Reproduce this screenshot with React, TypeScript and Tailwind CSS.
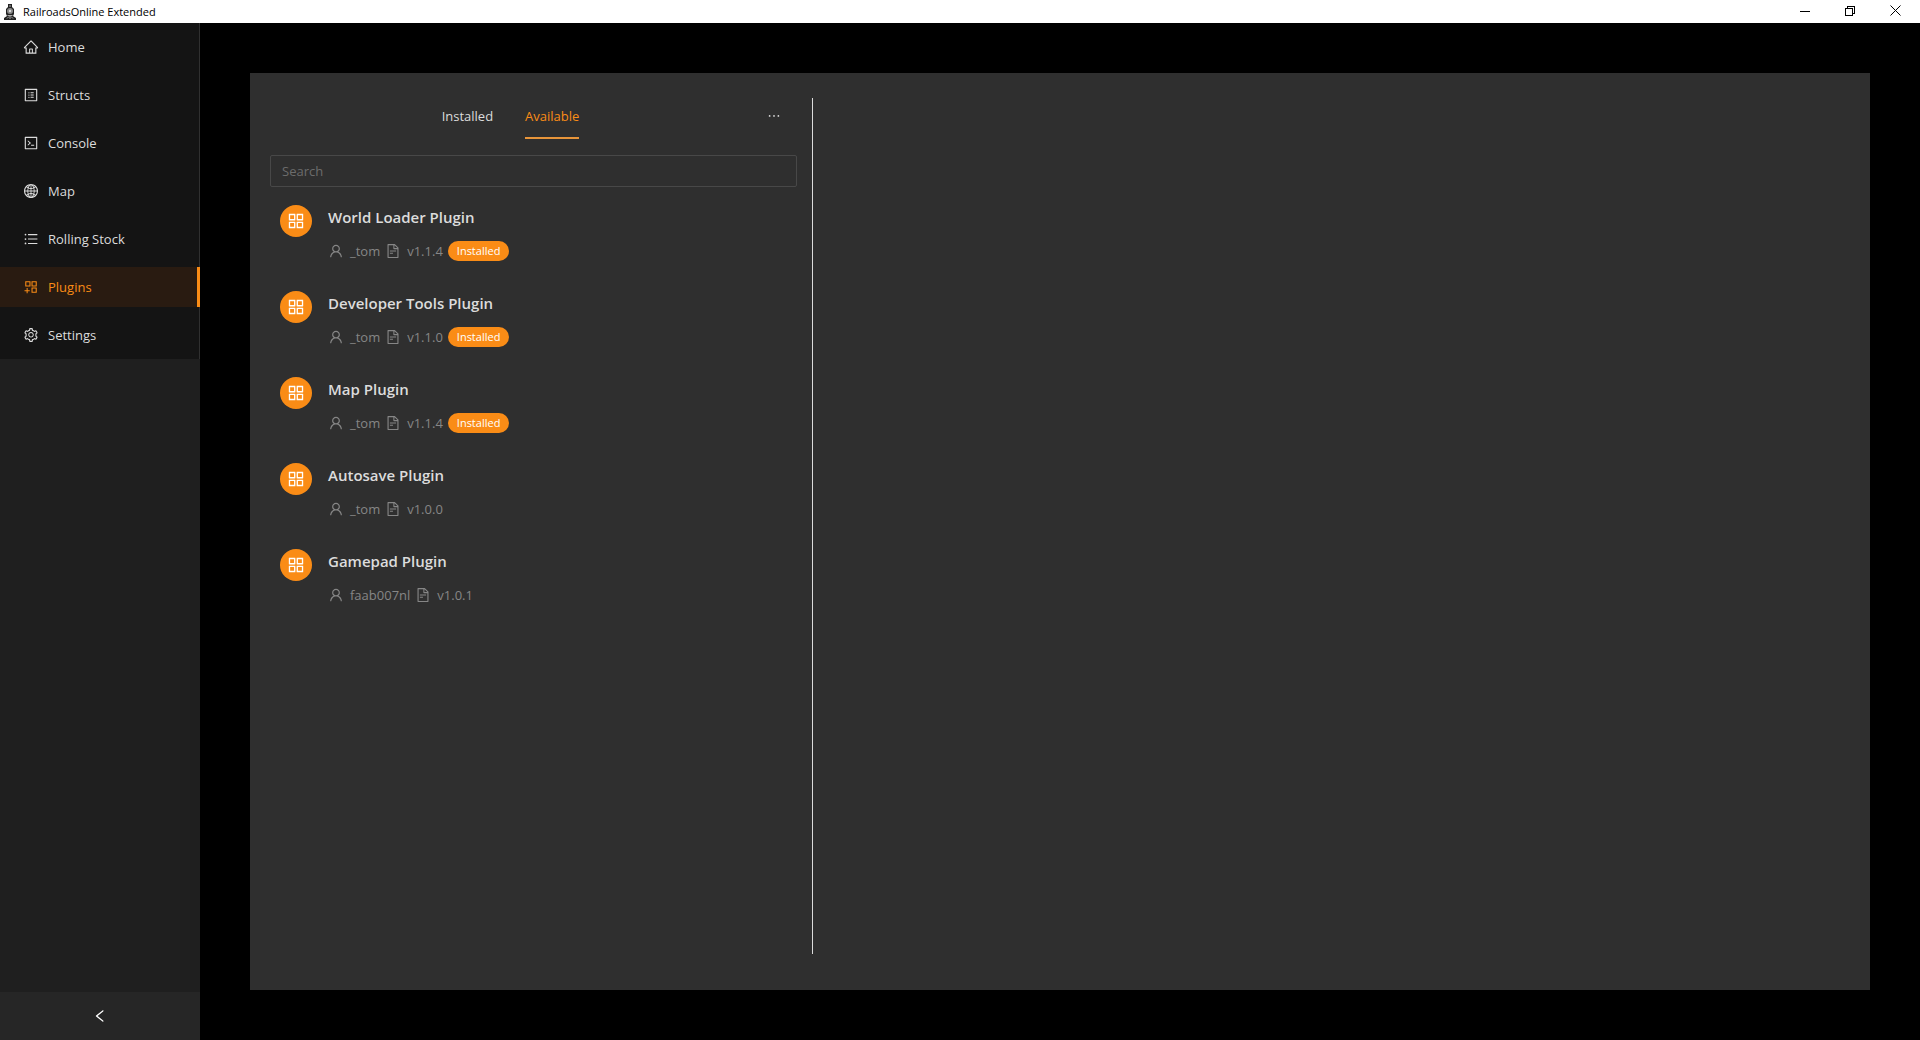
import React, { useState } from "react";
import {
  AiOutlineAppstore,
  AiOutlineAppstoreAdd,
  AiOutlineCode,
  AiOutlineEllipsis,
  AiOutlineFileText,
  AiOutlineGlobal,
  AiOutlineHome,
  AiOutlineLeft,
  AiOutlineProfile,
  AiOutlineSetting,
  AiOutlineUnorderedList,
  AiOutlineUser,
} from "react-icons/ai";

type Plugin = { name: string; author: string; version: string; installed: boolean };

const plugins: Plugin[] = [
  { name: "World Loader Plugin", author: "_tom", version: "v1.1.4", installed: true },
  { name: "Developer Tools Plugin", author: "_tom", version: "v1.1.0", installed: true },
  { name: "Map Plugin", author: "_tom", version: "v1.1.4", installed: true },
  { name: "Autosave Plugin", author: "_tom", version: "v1.0.0", installed: false },
  { name: "Gamepad Plugin", author: "faab007nl", version: "v1.0.1", installed: false },
];

const menu = [
  { label: "Home", icon: AiOutlineHome },
  { label: "Structs", icon: AiOutlineProfile },
  { label: "Console", icon: AiOutlineCode },
  { label: "Map", icon: AiOutlineGlobal },
  { label: "Rolling Stock", icon: AiOutlineUnorderedList },
  { label: "Plugins", icon: AiOutlineAppstoreAdd },
  { label: "Settings", icon: AiOutlineSetting },
];

const tabs = ["Installed", "Available"];

export default function App() {
  const [page, setPage] = useState("Plugins");
  const [tab, setTab] = useState("Available");
  const [search, setSearch] = useState("");

  const visible = plugins.filter(
    (p) => (tab === "Available" || p.installed) && p.name.toLowerCase().includes(search.toLowerCase())
  );

  return (
    <div className="flex min-h-screen flex-col bg-black font-['Segoe_UI','Open_Sans',sans-serif] text-sm text-[#dcdcdc]">
      <TitleBar />
      <div className="flex flex-1">
        <Sidebar page={page} onChange={setPage} />
        <main className="flex min-w-0 flex-1 p-[50px]">
          <div className="flex min-w-0 flex-1 bg-[#2f2f2f] px-5">
            <section className="w-[542px] pt-5 pr-[15px]">
              <div className="flex">
                <div role="tablist" className="flex flex-1 justify-center gap-8">
                  {tabs.map((item) => (
                    <button
                      key={item}
                      role="tab"
                      aria-selected={tab === item}
                      onClick={() => setTab(item)}
                      className={`h-[46px] border-b-2 pt-[2px] text-[13px] ${
                        tab === item ? "border-[#e8953a] text-[#fa8c16]" : "border-transparent"
                      }`}
                    >
                      {item}
                    </button>
                  ))}
                </div>
                <button aria-label="More" className="flex w-[46px] items-center justify-center">
                  <AiOutlineEllipsis className="size-4" />
                </button>
              </div>

              <input
                aria-label="Search"
                placeholder="Search"
                value={search}
                onChange={(e) => setSearch(e.target.value)}
                className="mt-4 block h-8 w-full rounded-xs border border-[#484848] bg-transparent px-[11px] text-[13px] outline-none placeholder:text-[#6c6c6c]"
              />

              <ul className="mt-[18px] px-[10px]">
                {visible.map((plugin) => (
                  <PluginItem key={plugin.name} plugin={plugin} />
                ))}
              </ul>
            </section>
            <div className="mt-[25px] mb-9 w-px bg-[#dcdcdc]" />
            <section className="flex-1" />
          </div>
        </main>
      </div>
    </div>
  );
}

function TitleBar() {
  return (
    <header className="flex h-[23px] items-center bg-white pr-[2px] text-black">
      <LocomotiveIcon />
      <h1 className="ml-[7px] flex-1 text-[11px]">RailroadsOnline Extended</h1>
      <button aria-label="Minimize" className="flex h-full w-[45px] items-center justify-center">
        <svg width="10" height="10" stroke="currentColor" fill="none" shapeRendering="crispEdges">
          <path d="M0 4.5h10" />
        </svg>
      </button>
      <button aria-label="Restore" className="flex h-full w-[45px] items-center justify-center">
        <svg width="10" height="12" stroke="currentColor" fill="none" shapeRendering="crispEdges">
          <path d="M0.5 2.5h7v7h-7zM2.5 2.5v-2h7v7h-2" />
        </svg>
      </button>
      <button aria-label="Close" className="flex h-full w-[46px] items-center justify-center">
        <svg width="11" height="13" stroke="currentColor" fill="none">
          <path d="M0.5 0.5l10 10M10.5 0.5l-10 10" />
        </svg>
      </button>
    </header>
  );
}

function LocomotiveIcon() {
  return (
    <svg width="12" height="16" viewBox="0 0 12 16" className="ml-1">
      <path d="M4 0h4v3l2 2v5l-1 2 3 2v2H0v-2l3-2-1-2V5l2-2z" fill="#222" />
      <circle cx="6" cy="7" r="3" fill="#888" />
      <circle cx="6" cy="7" r="1.2" fill="#ddd" />
      <path d="M5 2h2M3.500 11.500h5M3 14.500l2-2M9 14.500l-2-2M6 12v3" stroke="#aaa" fill="none" />
    </svg>
  );
}

function Sidebar({ page, onChange }: { page: string; onChange: (v: string) => void }) {
  return (
    <aside className="flex w-[200px] shrink-0 flex-col bg-[#1f1f1f]">
      <nav className="flex flex-col gap-2 border-r border-[#303030] bg-[#141414] py-1">
        {menu.map(({ label, icon: Icon }) => (
          <button
            key={label}
            onClick={() => onChange(label)}
            className={`-mr-px flex h-10 items-center gap-[9px] border-r-3 pl-[23px] text-[13px] ${
              page === label ? "border-[#fa8c16] bg-[#291b11] text-[#fa8c16]" : "border-transparent"
            }`}
          >
            <Icon className="size-4" />
            {label}
          </button>
        ))}
      </nav>
      <button aria-label="Collapse sidebar" className="mt-auto flex h-12 items-center justify-center bg-[#262626] text-white">
        <AiOutlineLeft className="size-4" />
      </button>
    </aside>
  );
}

function PluginItem({ plugin }: { plugin: Plugin }) {
  return (
    <li className="flex h-[86px] gap-4">
      <div className="flex size-8 items-center justify-center rounded-full bg-[#fa8c16] text-white">
        <AiOutlineAppstore className="size-5" />
      </div>
      <div>
        <h2 className="text-[15px] leading-6 font-semibold">{plugin.name}</h2>
        <div className="mt-3 flex h-5 items-center text-[13px] text-[#868686]">
          <AiOutlineUser className="mr-[6px] size-4" />
          <span className="mr-[5px]">{plugin.author}</span>
          <AiOutlineFileText className="mr-[6px] size-4" />
          <span>{plugin.version}</span>
          {plugin.installed && (
            <span className="ml-[5px] flex h-5 items-center rounded-full bg-[#fa8c16] px-[9px] text-[11px] font-medium text-white">
              Installed
            </span>
          )}
        </div>
      </div>
    </li>
  );
}
